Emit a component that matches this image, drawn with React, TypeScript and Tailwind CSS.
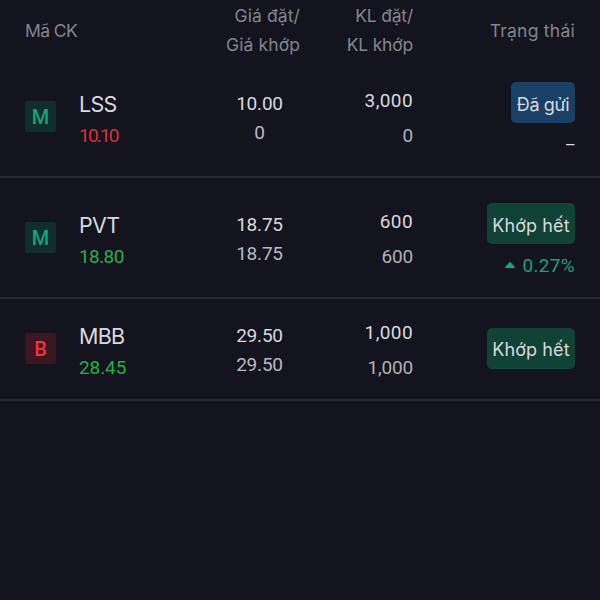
import React from 'react';
import clsx from 'clsx';

const orders = [
  {
    side: 'M', symbol: 'LSS', last: '10.10', lastClass: 'text-[#d92f35] tracking-[-1.8px]',
    price: '10.00', matchedPrice: '0', volume: '3,000', matchedVolume: '0',
    status: 'Đã gửi', statusClass: 'bg-[#1a4066] w-16 tracking-[-0.4px]', change: '–', up: false, rowClass: 'h-[122px] pt-px',
  },
  {
    side: 'M', symbol: 'PVT', last: '18.80', lastClass: 'text-[#22b04c] tracking-[-0.6px]',
    price: '18.75', matchedPrice: '18.75', volume: '600', matchedVolume: '600',
    status: 'Khớp hết', statusClass: 'bg-[#104235] w-[88px] tracking-[0.1px]', change: '0.27%', up: true, rowClass: 'h-[121px]',
  },
  {
    side: 'B', symbol: 'MBB', last: '28.45', lastClass: 'text-[#22b04c] tracking-[-0.1px]',
    price: '29.50', matchedPrice: '29.50', volume: '1,000', matchedVolume: '1,000',
    status: 'Khớp hết', statusClass: 'bg-[#104235] w-[88px] tracking-[0.1px]', change: '', up: false, rowClass: 'h-[102px] pb-[2px]',
  },
];

const columns = 'grid grid-cols-[175px_119px_94px_162px] px-[25px]';

const SideBadge = ({ side }: { side: string }) => (
  <div
    className={clsx(
      'flex h-[31px] w-[31px] shrink-0 items-center justify-center rounded-[2px] pt-px font-[Roboto] text-[20px] font-medium',
      side === 'M' ? 'bg-[#122d2e] text-[#13a674]' : 'bg-[#3b1721] text-[#f53237]',
    )}
  >
    {side}
  </div>
);

export default function App() {
  return (
    <div className="h-[600px] w-[600px] overflow-hidden bg-[#14141e] font-[Roboto,sans-serif] text-[19px] text-[#d9d9de]">
      <div className={clsx(columns, 'h-14 pt-px font-[Inter,sans-serif] text-[17.5px] leading-[29px] text-[#85858d]')}>
        <div className="pt-[15px] tracking-[-0.6px]">Mã CK</div>
        <div className="pr-[19px] text-right tracking-[0.1px] whitespace-nowrap">Giá đặt/<br />Giá khớp</div>
        <div className="text-right tracking-[-0.2px] whitespace-nowrap">KL đặt/<br />KL khớp</div>
        <div className="pt-[15px] text-right tracking-[0.25px]">Trạng thái</div>
      </div>

      {orders.map((order) => (
        <div key={order.symbol} className={clsx(columns, order.rowClass, 'items-center border-b-2 border-[#292932]')}>
          <div className="flex items-center">
            <SideBadge side={order.side} />
            <div className="ml-[23px] pt-[7px] leading-[31px]">
              <div className="font-[Inter] text-[21.5px] tracking-[-0.7px]">{order.symbol}</div>
              <div className={order.lastClass}>{order.last}</div>
            </div>
          </div>
          <div className="pt-[3px] text-center leading-[29px] tracking-[-0.2px]">
            <div>{order.price}</div>
            <div className="text-[#b9b9c0]">{order.matchedPrice}</div>
          </div>
          <div className="pt-[3px] text-right leading-[35px]">
            <div className="tracking-[0.4px]">{order.volume}</div>
            <div className="tracking-[-0.2px] text-[#b0b0b7]">{order.matchedVolume}</div>
          </div>
          <div className={clsx('flex flex-col items-end', order.change && 'pt-[9px]')}>
            <div
              className={clsx(
                'flex h-[41px] items-center justify-center rounded-[5px] pt-[3px] font-[Inter] text-[18px] whitespace-nowrap',
                order.statusClass,
              )}
            >
              {order.status}
            </div>
            {order.change && (
              <div className={clsx('mt-[8px] flex h-[29px] items-center', order.up && 'text-[#16a47b]')}>
                {order.up && (
                  <svg width="10" height="6" viewBox="0 0 10 6" className="mr-[8px] mb-[3px]">
                    <path d="M0 5.2 4.2.4Q5-.2 5.8.4L10 5.2Q10 6 9.2 6H.8Q0 6 0 5.2Z" fill="currentColor" />
                  </svg>
                )}
                <span className={order.up ? 'tracking-[0.3px]' : '-mr-px text-[17px]'}>{order.change}</span>
              </div>
            )}
          </div>
        </div>
      ))}
    </div>
  );
}
